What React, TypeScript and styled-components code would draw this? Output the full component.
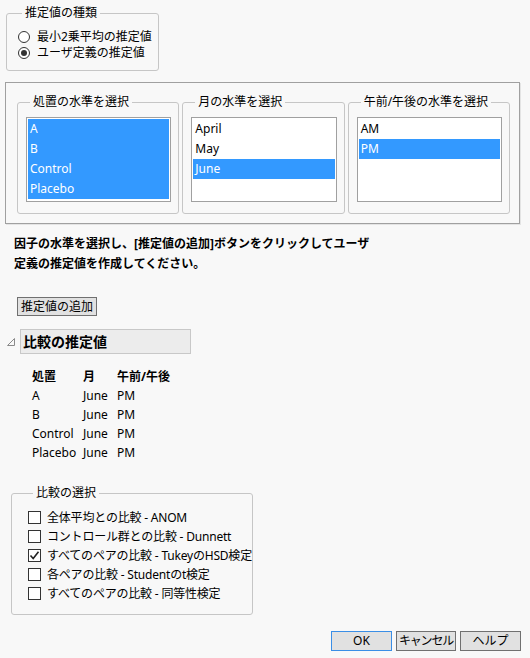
import React from 'react';
import styled, {createGlobalStyle} from 'styled-components';

const GlobalStyle = createGlobalStyle`
	html, body {
		margin: 0;
		padding: 0;
		background: #f8f8f8;
	}

	body {
		font-family: "Noto Sans", "Noto Sans CJK JP", sans-serif;
		font-size: 12px;
		color: #000000;
	}

	* {
		box-sizing: border-box;
	}
`;

const Page = styled.div`
	width: 530px;
	min-height: 658px;
	padding: 5px 9px 0 5px;
`;

const GroupBox = styled.fieldset`
	margin: 0;
	min-width: 0;
	border: 1px solid #c6c6c6;
	border-radius: 3px;
`;

const Legend = styled.legend<{$offset?: number}>`
	margin-left: ${p => p.$offset ?? 4}px;
	padding: 0 3px;
	font-size: 12px;
	line-height: 16px;
`;

const KindBox = styled(GroupBox)`
	width: 153px;
	margin-left: 1px;
	padding: 8px 0 9px 11px;
`;

const RadioRow = styled.label`
	display: flex;
	align-items: center;
	gap: 7px;
	height: 16px;
	line-height: 16px;
	white-space: nowrap;
`;

const Radio = styled.span<{$on?: boolean}>`
	position: relative;
	width: 12px;
	height: 12px;
	border: 1px solid #333333;
	border-radius: 50%;
	background: #ffffff;

	&::after {
		content: '';
		display: ${p => (p.$on ? 'block' : 'none')};
		position: absolute;
		left: 2px;
		top: 2px;
		width: 6px;
		height: 6px;
		border-radius: 50%;
		background: #333333;
	}
`;

const Panel = styled.div`
	display: flex;
	gap: 3px;
	width: 515px;
	height: 142px;
	margin-top: 11px;
	padding: 11px 9px 9px 11px;
	border: 1px solid #a0a0a0;
	box-shadow: 1px 1px 0 #e4e4e4;
`;

const LevelBox = styled(GroupBox)`
	width: 163px;
	padding: 7px 7px 11px 8px;
`;

const ListBox = styled.div`
	height: 85px;
	padding: 1px;
	border: 1px solid #a0a0a0;
	background: #ffffff;
`;

const ListItem = styled.div<{$selected?: boolean}>`
	height: 20px;
	line-height: 20px;
	padding-left: 2px;
	font-size: 12px;
	color: ${p => (p.$selected ? '#ffffff' : '#000000')};
	background: ${p => (p.$selected ? '#3399ff' : 'transparent')};
`;

const Instruction = styled.p`
	margin: 10px 0 0 9px;
	font-weight: bold;
	font-size: 12px;
	line-height: 20px;
`;

const AddButton = styled.button`
	display: block;
	height: 19px;
	margin: 23px 0 0 12px;
	padding: 0 3px;
	border: 1px solid #707070;
	background: #e1e1e1;
	font-family: inherit;
	font-size: 12px;
	line-height: 17px;
	color: #000000;
`;

const OutlineRow = styled.div`
	display: flex;
	align-items: center;
	gap: 5px;
	margin: 13px 0 0 2px;
`;

const OutlineTitle = styled.div`
	width: 171px;
	height: 25px;
	padding-left: 2px;
	border: 1px solid #c8c8c8;
	background: #ececec;
	font-weight: bold;
	font-size: 14px;
	line-height: 23px;
`;

const Table = styled.table`
	margin: 13px 0 0 27px;
	border-collapse: collapse;
	font-size: 12px;

	th, td {
		height: 19px;
		padding: 0;
		line-height: 19px;
		text-align: left;
		white-space: nowrap;
	}

	th {
		font-weight: bold;
	}
`;

const Col = styled.col<{$w?: number}>`
	width: ${p => (p.$w ? `${p.$w}px` : 'auto')};
`;

const CompareBox = styled(GroupBox)`
	width: 242px;
	margin: 23px 0 0 6px;
	padding: 7px 0 11px 16px;
`;

const CheckRow = styled.label`
	display: flex;
	align-items: center;
	gap: 6px;
	height: 19px;
	line-height: 19px;
	white-space: nowrap;
	letter-spacing: -0.2px;
`;

const CheckBox = styled.span`
	display: flex;
	flex: none;
	align-items: center;
	justify-content: center;
	width: 13px;
	height: 13px;
	border: 1px solid #333333;
	background: #ffffff;
`;

const Footer = styled.div`
	display: flex;
	justify-content: flex-end;
	gap: 4px;
	margin-top: 16px;
`;

const DlgButton = styled.button<{$primary?: boolean; $w?: number; $tight?: boolean}>`
	width: ${p => p.$w ?? 61}px;
	height: 20px;
	padding: 0;
	border: 1px solid ${p => (p.$primary ? '#3a8ee6' : '#707070')};
	background: #e1e1e1;
	font-family: inherit;
	font-size: 12px;
	line-height: 18px;
	letter-spacing: ${p => (p.$tight ? '-1.2px' : '0')};
	white-space: nowrap;
	color: #000000;
`;

const levels = [
	{title: '処置の水準を選択', items: ['A', 'B', 'Control', 'Placebo'], selected: [0, 1, 2, 3]},
	{title: '月の水準を選択', items: ['April', 'May', 'June'], selected: [2]},
	{title: '午前/午後の水準を選択', items: ['AM', 'PM'], selected: [1]},
];

const estimates = [
	['A', 'June', 'PM'],
	['B', 'June', 'PM'],
	['Control', 'June', 'PM'],
	['Placebo', 'June', 'PM'],
];

const comparisons = [
	{label: '全体平均との比較 - ANOM', on: false},
	{label: 'コントロール群との比較 - Dunnett', on: false},
	{label: 'すべてのペアの比較 - TukeyのHSD検定', on: true},
	{label: '各ペアの比較 - Studentのt検定', on: false},
	{label: 'すべてのペアの比較 - 同等性検定', on: false},
];

const Triangle = () => (
	<svg width="8" height="8" viewBox="0 0 8 8">
		<path d="M0.5 7.5 L7.5 0.5 L7.5 7.5 Z" fill="none" stroke="#8a8a8a" strokeWidth="1" />
	</svg>
);

const Check = () => (
	<svg width="11" height="11" viewBox="0 0 11 11">
		<path d="M1.5 5.5 L4.2 8.5 L9.5 1.8" fill="none" stroke="#222222" strokeWidth="1.6" />
	</svg>
);

const App = () => (
	<Page>
		<GlobalStyle />
		<KindBox>
			<Legend>推定値の種類</Legend>
			<RadioRow><Radio />最小2乗平均の推定値</RadioRow>
			<RadioRow><Radio $on />ユーザ定義の推定値</RadioRow>
		</KindBox>

		<Panel>
			{levels.map(level => (
				<LevelBox key={level.title}>
					<Legend>{level.title}</Legend>
					<ListBox>
						{level.items.map((item, i) => (
							<ListItem key={item} $selected={level.selected.includes(i)}>{item}</ListItem>
						))}
					</ListBox>
				</LevelBox>
			))}
		</Panel>

		<Instruction>
			因子の水準を選択し、[推定値の追加]ボタンをクリックしてユーザ<br />
			定義の推定値を作成してください。
		</Instruction>

		<AddButton>推定値の追加</AddButton>

		<OutlineRow>
			<Triangle />
			<OutlineTitle>比較の推定値</OutlineTitle>
		</OutlineRow>

		<Table>
			<colgroup>
				<Col $w={51} />
				<Col $w={34} />
				<Col />
			</colgroup>
			<thead>
				<tr><th>処置</th><th>月</th><th>午前/午後</th></tr>
			</thead>
			<tbody>
				{estimates.map(row => (
					<tr key={row[0]}>
						{row.map((cell, i) => <td key={i}>{cell}</td>)}
					</tr>
				))}
			</tbody>
		</Table>

		<CompareBox>
			<Legend $offset={5}>比較の選択</Legend>
			{comparisons.map(c => (
				<CheckRow key={c.label}>
					<CheckBox>{c.on && <Check />}</CheckBox>
					{c.label}
				</CheckRow>
			))}
		</CompareBox>

		<Footer>
			<DlgButton $primary>OK</DlgButton>
			<DlgButton $w={60} $tight>キャンセル</DlgButton>
			<DlgButton>ヘルプ</DlgButton>
		</Footer>
	</Page>
);

export default App;
